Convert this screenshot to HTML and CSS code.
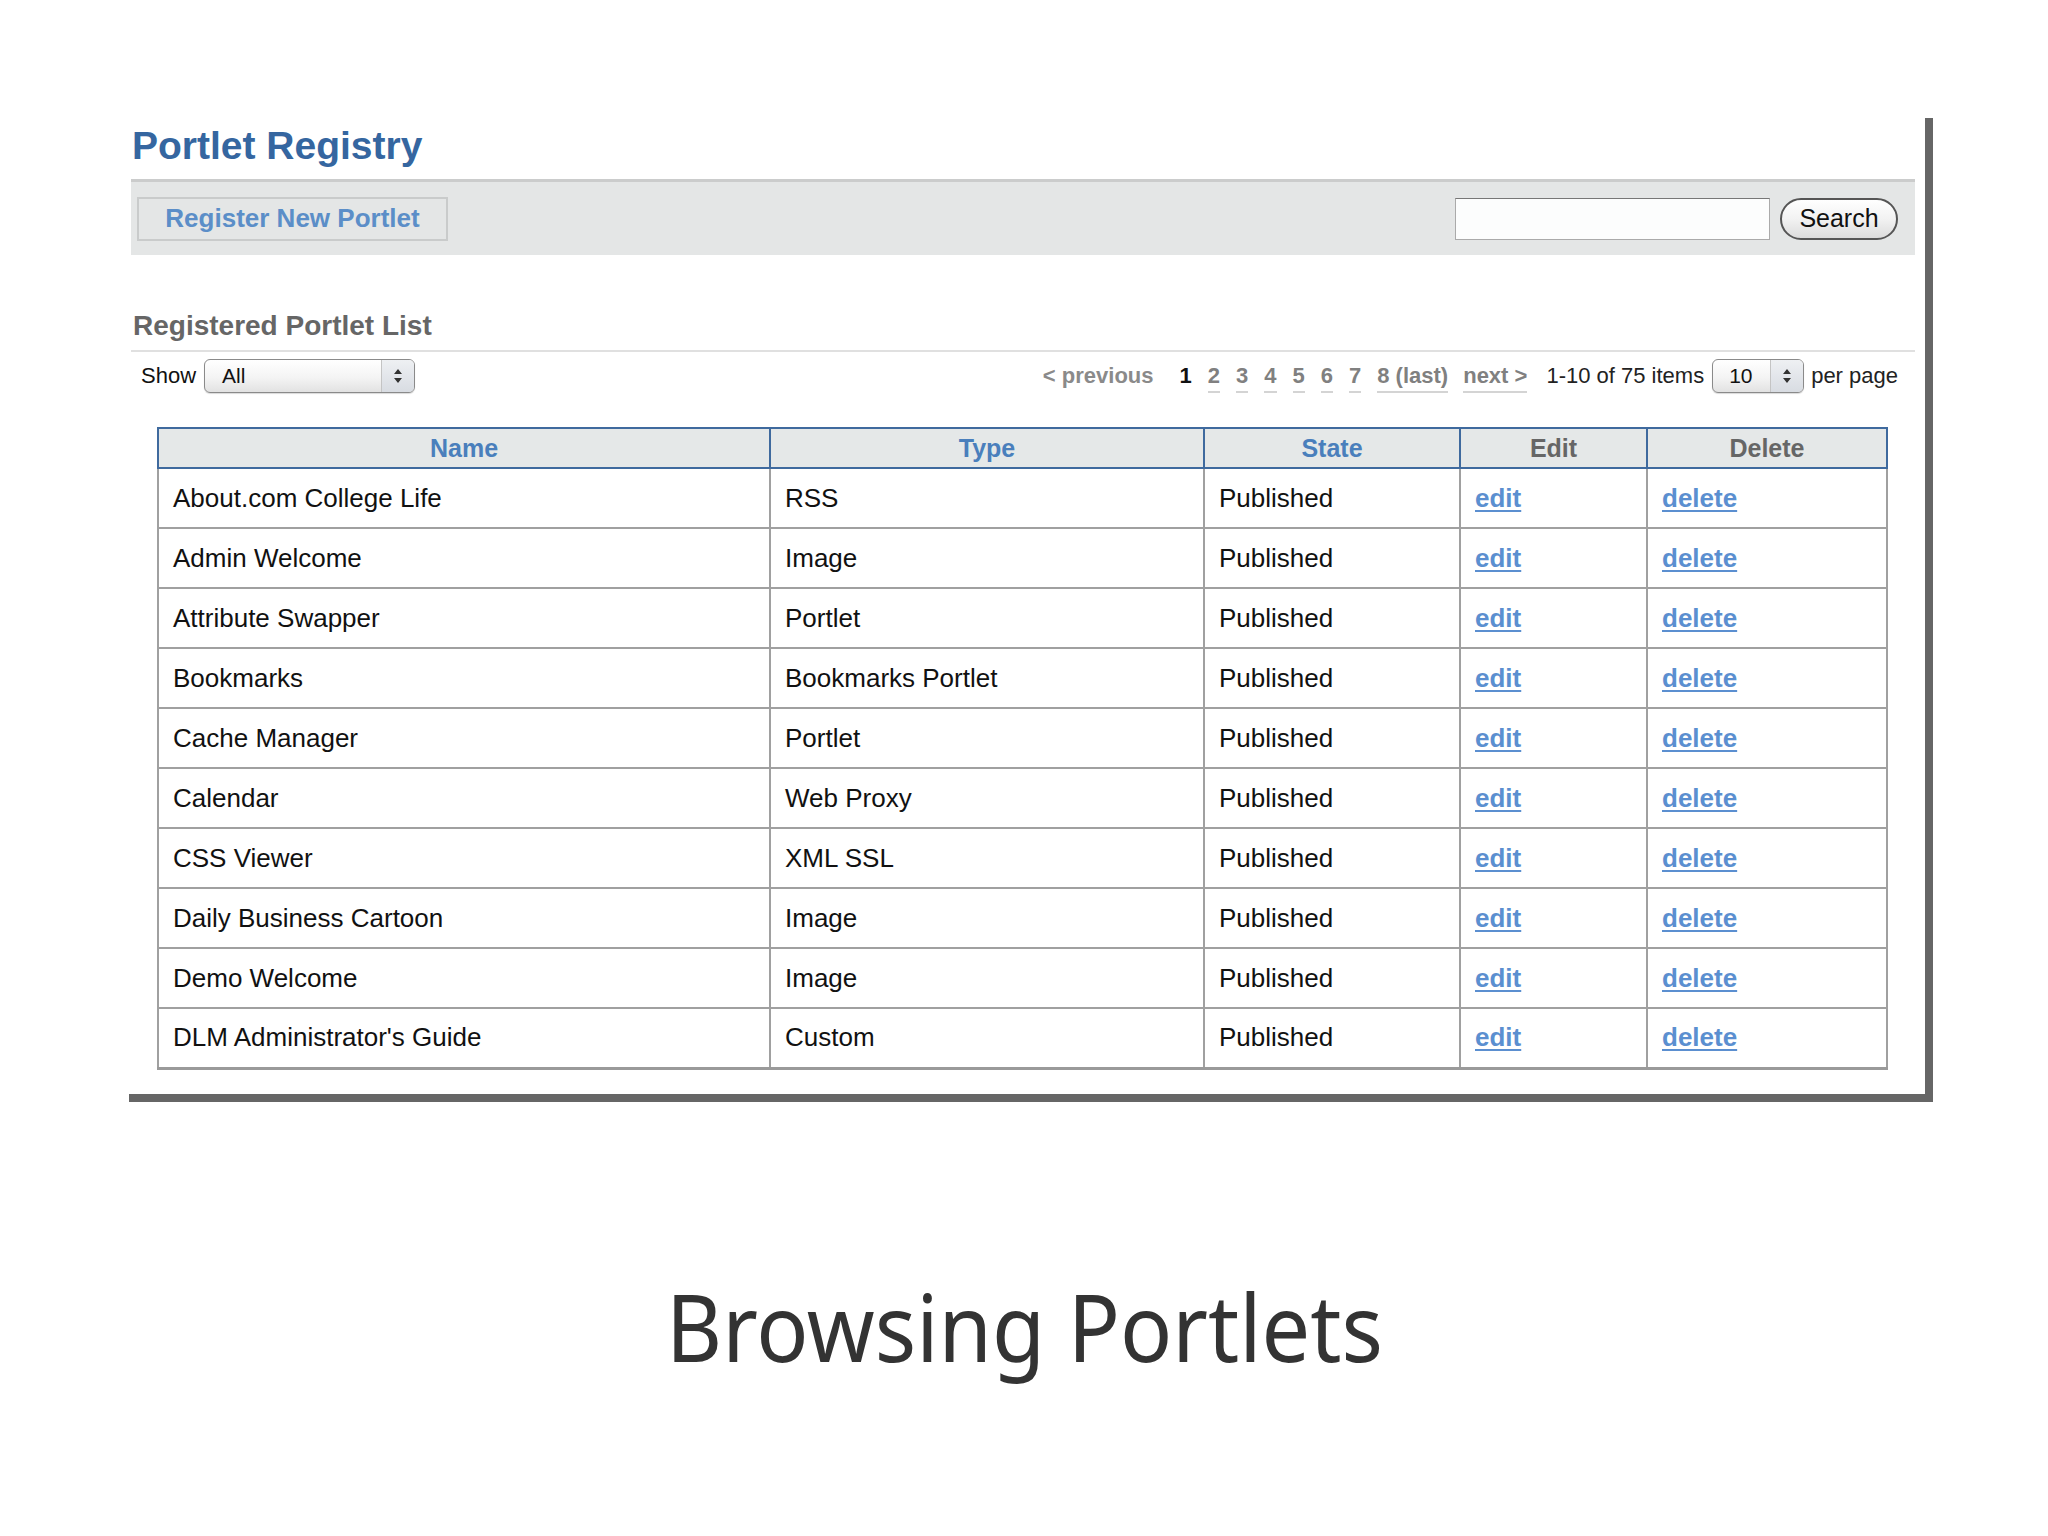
FILE: index.html
```html
<!DOCTYPE html>
<html lang="en">
<head>
    <meta charset="UTF-8">
    <title>Browsing Portlets</title>
    <link rel="stylesheet" href="styles.css">
</head>
<body>
  <div class="slide">
    <div class="panel">
      <h1 class="title">Portlet Registry</h1>

      <div class="toolbar">
        <a class="register-btn" href="#">Register New Portlet</a>
        <div class="search">
          <input class="search-input" type="text">
          <button class="search-btn">Search</button>
        </div>
      </div>

      <h2 class="list-title">Registered Portlet List</h2>

      <div class="list-controls">
        <div class="show">
          <span>Show</span>
          <div class="select select-show">
            <span class="select-value">All</span>
            <span class="select-arrows">
              <svg width="12" height="18" viewBox="0 0 12 18"><path d="M6 2 L10 7 L2 7 Z M6 16 L10 11 L2 11 Z" fill="#333"/></svg>
            </span>
          </div>
        </div>

        <div class="pager">
          <a class="prev" href="#">&lt; previous</a>
          <span class="pages">
            <span class="current">1</span>
            <a href="#">2</a>
            <a href="#">3</a>
            <a href="#">4</a>
            <a href="#">5</a>
            <a href="#">6</a>
            <a href="#">7</a>
            <a href="#">8 (last)</a>
          </span>
          <a class="next" href="#">next &gt;</a>
          <span class="count">1-10 of 75 items</span>
          <div class="select select-per">
            <span class="select-value">10</span>
            <span class="select-arrows">
              <svg width="12" height="18" viewBox="0 0 12 18"><path d="M6 2 L10 7 L2 7 Z M6 16 L10 11 L2 11 Z" fill="#333"/></svg>
            </span>
          </div>
          <span class="count">per page</span>
        </div>
      </div>

      <table class="portlets">
        <thead>
          <tr>
            <th class="col-name">Name</th>
            <th class="col-type">Type</th>
            <th class="col-state">State</th>
            <th class="col-edit plain">Edit</th>
            <th class="col-delete plain">Delete</th>
          </tr>
        </thead>
        <tbody>
          <tr><td>About.com College Life</td><td>RSS</td><td>Published</td><td><a href="#">edit</a></td><td><a href="#">delete</a></td></tr>
          <tr><td>Admin Welcome</td><td>Image</td><td>Published</td><td><a href="#">edit</a></td><td><a href="#">delete</a></td></tr>
          <tr><td>Attribute Swapper</td><td>Portlet</td><td>Published</td><td><a href="#">edit</a></td><td><a href="#">delete</a></td></tr>
          <tr><td>Bookmarks</td><td>Bookmarks Portlet</td><td>Published</td><td><a href="#">edit</a></td><td><a href="#">delete</a></td></tr>
          <tr><td>Cache Manager</td><td>Portlet</td><td>Published</td><td><a href="#">edit</a></td><td><a href="#">delete</a></td></tr>
          <tr><td>Calendar</td><td>Web Proxy</td><td>Published</td><td><a href="#">edit</a></td><td><a href="#">delete</a></td></tr>
          <tr><td>CSS Viewer</td><td>XML SSL</td><td>Published</td><td><a href="#">edit</a></td><td><a href="#">delete</a></td></tr>
          <tr><td>Daily Business Cartoon</td><td>Image</td><td>Published</td><td><a href="#">edit</a></td><td><a href="#">delete</a></td></tr>
          <tr><td>Demo Welcome</td><td>Image</td><td>Published</td><td><a href="#">edit</a></td><td><a href="#">delete</a></td></tr>
          <tr><td>DLM Administrator's Guide</td><td>Custom</td><td>Published</td><td><a href="#">edit</a></td><td><a href="#">delete</a></td></tr>
        </tbody>
      </table>
    </div>

    <p class="caption"><span>Browsing Portlets</span></p>
  </div>
</body>
</html>
```

FILE: styles.css
```css
* {
    margin: 0;
    padding: 0;
    box-sizing: border-box;
}
body {
    background: #fff;
    font-family: 'Liberation Sans', Arial, sans-serif;
    color: #111;
}
a {
    text-decoration: none;
}
.slide {
    width: 2048px;
    height: 1536px;
    padding-top: 118px;
}
.panel {
    width: 1804px;
    margin-left: 129px;
    padding: 6px 10px 24px 2px;
    border-right: 8px solid #666;
    border-bottom: 8px solid #666;
}
.title {
    font-size: 39px;
    line-height: 44px;
    font-weight: bold;
    color: #3566a0;
    margin-left: 1px;
}
.toolbar {
    margin-top: 11px;
    height: 76px;
    background: #e4e6e6;
    border-top: 3px solid #cbcccc;
    display: flex;
    align-items: center;
    justify-content: space-between;
    padding: 0 17px 0 6px;
}
.register-btn {
    width: 311px;
    height: 44px;
    border: 2px solid #c9cbcb;
    display: flex;
    align-items: center;
    justify-content: center;
    font-size: 26px;
    font-weight: bold;
    color: #5b8ec8;
}
.search {
    display: flex;
    align-items: center;
    gap: 10px;
}
.search-input {
    width: 315px;
    height: 42px;
    border: 1px solid #aaa;
    border-top-color: #777;
    background: #fcfdfd;
}
.search-btn {
    width: 118px;
    height: 42px;
    border: 2px solid #555;
    border-radius: 21px;
    background: linear-gradient(#fff, #f2f2f2 50%, #dcdcdc);
    font-family: 'Liberation Sans', Arial, sans-serif;
    font-size: 25px;
    color: #111;
}
.list-title {
    margin-top: 55px;
    font-size: 28px;
    line-height: 32px;
    font-weight: bold;
    color: #666;
    padding: 0 0 8px 2px;
    border-bottom: 2px solid #e0e0e0;
}
.list-controls {
    margin-top: 6px;
    height: 36px;
    display: flex;
    align-items: center;
    justify-content: space-between;
    padding: 0 17px 0 10px;
}
.show {
    display: flex;
    align-items: center;
    gap: 8px;
    font-size: 22px;
    color: #111;
}
.select {
    display: flex;
    align-items: stretch;
    height: 34px;
    border: 1px solid #8a8a8a;
    border-radius: 6px;
    background: linear-gradient(#fff, #f4f4f4 55%, #e2e2e2);
    box-shadow: 0 1px 1px rgba(0, 0, 0, 0.15);
    overflow: hidden;
}
.select-value {
    flex: 1;
    display: flex;
    align-items: center;
    font-size: 21px;
    color: #111;
}
.select-arrows {
    width: 33px;
    display: flex;
    align-items: center;
    justify-content: center;
    border-left: 1px solid #c4c4c4;
    background: linear-gradient(#eef0f3, #d8dce2);
}
.select-show {
    width: 211px;
}
.select-show .select-value {
    padding-left: 17px;
}
.select-per {
    width: 92px;
}
.select-per .select-value {
    padding-left: 16px;
}
.pager {
    display: flex;
    align-items: center;
    font-size: 22px;
}
.pager .prev {
    font-weight: bold;
    color: #8a8a8a;
    margin-right: 26px;
}
.pages {
    display: flex;
    gap: 16px;
    font-weight: bold;
    margin-right: 15px;
}
.pages a {
    color: #808080;
    border-bottom: 2px solid #d4d4d4;
    padding-bottom: 2px;
    margin-bottom: -4px;
}
.pages .current {
    color: #111;
    margin-bottom: -6px;
}
.pager .next {
    font-weight: bold;
    color: #808080;
    border-bottom: 2px solid #d4d4d4;
    padding-bottom: 2px;
    margin: 0 19px -4px 0;
}
.count {
    color: #222;
}
.select-per {
    margin: 0 7px 0 8px;
}
.portlets {
    margin: 33px 0 0 26px;
    width: 1729px;
    border-collapse: collapse;
    table-layout: fixed;
}
.portlets th {
    height: 40px;
    background: #e5e8e8;
    border: 2px solid #3f6a9e;
    font-size: 25px;
    font-weight: bold;
    color: #4a7fbc;
    text-align: center;
}
.portlets th.plain {
    color: #666;
}
.col-name { width: 612px; }
.col-type { width: 434px; }
.col-state { width: 256px; }
.col-edit { width: 187px; }
.col-delete { width: 240px; }
.portlets td {
    height: 60px;
    border: 2px solid #a0a0a0;
    padding-left: 14px;
    font-size: 26px;
    color: #111;
}
.portlets tbody tr:last-child td {
    border-bottom: 3px solid #9a9a9a;
}
.portlets td a {
    font-weight: bold;
    color: #5b8fd0;
    text-decoration: underline;
    text-underline-offset: 3px;
    text-decoration-thickness: 2px;
}
.caption {
    margin-top: 168px;
    text-align: center;
    font-family: 'Noto Sans', sans-serif;
    font-size: 93px;
    line-height: 112px;
    color: #333;
}
.caption span {
    display: inline-block;
    transform: scaleX(0.93);
}
```
